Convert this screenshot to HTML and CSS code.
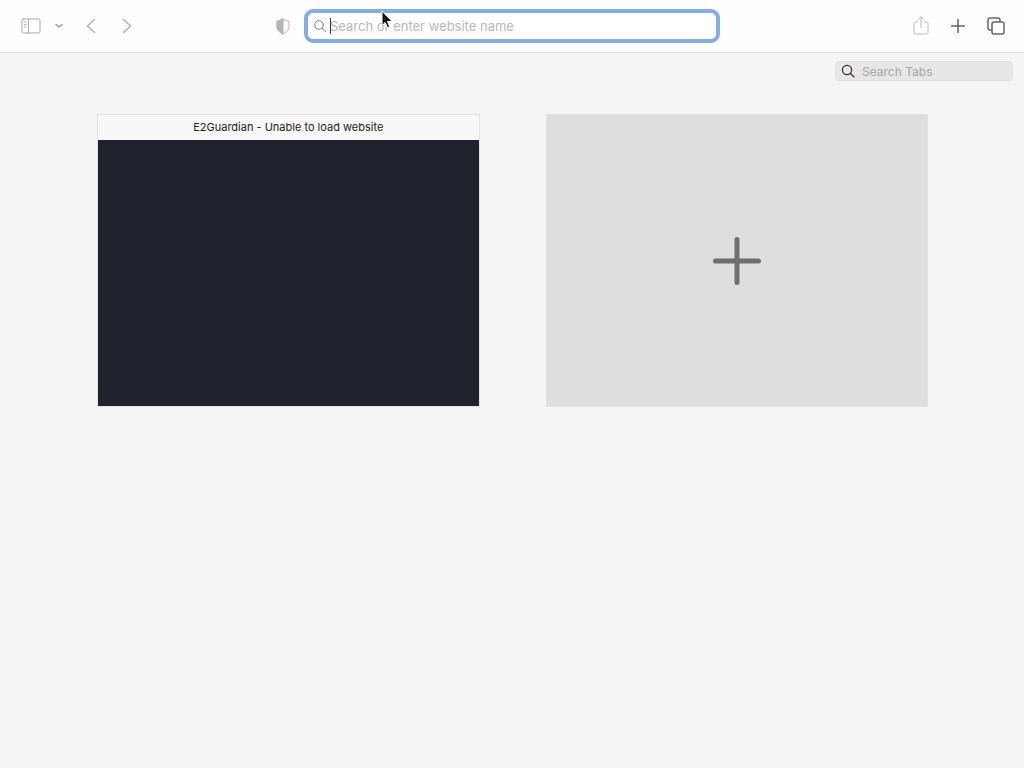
FILE: index.html
```html
<!DOCTYPE html>
<html lang="en">
<head>
<meta charset="utf-8">
<meta name="viewport" content="width=device-width, initial-scale=1">
<title>Tab Overview</title>
<link rel="stylesheet" href="styles.css">
</head>
<body>
<header class="toolbar">
  <div class="tools tools-left">
    <button class="tool sidebar" type="button" aria-label="Show sidebar">
      <svg width="20" height="16" viewBox="0 0 20 16"><rect x="1" y="1" width="18" height="14" rx="1.500"/><path d="M7.500 1v14M3.500 4h1.500M3.500 6.500h1.500M3.500 9h1.500"/></svg>
    </button>
    <button class="tool groups" type="button" aria-label="Tab groups">
      <svg width="10" height="6" viewBox="0 0 10 6"><path d="M2 1.500 5 4l3-2.500"/></svg>
    </button>
    <button class="tool back" type="button" aria-label="Back">
      <svg width="10" height="16" viewBox="0 0 10 16"><path d="M8.500 1.500 1.500 8l7 6.500"/></svg>
    </button>
    <button class="tool forward" type="button" aria-label="Forward">
      <svg width="10" height="16" viewBox="0 0 10 16"><path d="M1.500 1.500l7 6.500-7 6.500"/></svg>
    </button>
    <button class="tool shield" type="button" aria-label="Privacy report">
      <svg width="14" height="17" viewBox="0 0 14 17"><path d="M7 1c2 1.300 4 1.800 6 2v6c0 3-3 5.500-6 7-3-1.500-6-4-6-7V3c2-.2 4-.7 6-2z"/><path class="shield-half" d="M7 1v15c-3-1.500-6-4-6-7V3c2-.2 4-.7 6-2z"/></svg>
    </button>
  </div>
  <label class="address">
    <svg width="14" height="14" viewBox="0 0 14 14" aria-hidden="true"><circle cx="6" cy="6" r="4.300"/><path d="m9.200 9.200 3.500 3.500"/></svg>
    <input class="address-input" type="text" placeholder="Search or enter website name" aria-label="Search or enter website name">
    <span class="caret"></span>
    <svg class="pointer" width="14" height="20" viewBox="0 0 14 20" aria-hidden="true"><path d="M2 1.500v14l3.200-3 2.300 5.300 2.300-1-2.300-5.200H12z"/></svg>
  </label>
  <div class="tools tools-right">
    <button class="tool share" type="button" aria-label="Share">
      <svg width="16" height="20" viewBox="0 0 16 20"><path d="M5 6H2.500Q1 6 1 7.500v9Q1 18 2.500 18h11q1.500 0 1.500-1.500v-9Q15 6 13.500 6H11M8 11.500V1M5 3.800l3-3 3 3"/></svg>
    </button>
    <button class="tool new-tab" type="button" aria-label="New tab">
      <svg width="14" height="14" viewBox="0 0 14 14"><path d="M7 .5v13M.5 7h13"/></svg>
    </button>
    <button class="tool overview" type="button" aria-label="Tab overview">
      <svg width="18" height="18" viewBox="0 0 18 18"><path d="M4.500 13H3q-2 0-2-2V3q0-2 2-2h8q2 0 2 2v1.500"/><rect x="5" y="5" width="12" height="12" rx="2"/></svg>
    </button>
  </div>
</header>
<main>
  <div class="search-row">
    <label class="tab-search">
      <svg width="14" height="14" viewBox="0 0 14 14" aria-hidden="true"><circle cx="6" cy="6" r="4.600"/><path d="m9.300 9.300 3.700 3.700"/></svg>
      <input class="tab-input" type="search" placeholder="Search Tabs" aria-label="Search Tabs">
    </label>
  </div>
  <div class="tabs">
    <article class="tab">
      <h2 class="tab-title">E2Guardian - Unable to load website</h2>
      <div class="preview"></div>
    </article>
    <button class="add-tab" type="button" aria-label="Add tab">
      <svg width="48" height="48" viewBox="0 0 48 48"><path d="M24 2.500v43M2.500 24h43"/></svg>
    </button>
  </div>
</main>
</body>
</html>
```
FILE: styles.css
```css
* { box-sizing: border-box; }
body {
  margin: 0;
  min-height: 100vh;
  background: #f5f5f5;
  color: #222;
  font-family: Inter, "Liberation Sans", sans-serif;
}
svg {
  display: block;
  flex: none;
  fill: none;
  stroke: currentColor;
  stroke-linecap: round;
  stroke-linejoin: round;
}
button, input {
  margin: 0;
  padding: 0;
  border: 0;
  background: none;
  font: inherit;
}
.toolbar {
  display: grid;
  grid-template-columns: minmax(0, 1fr) minmax(0, 416px) minmax(0, 1fr);
  align-items: center;
  height: 53px;
  background: #fefefe;
  border-bottom: 1px solid #dcdcdc;
}
.tools { display: flex; align-items: center; }
.tools-left { padding: 0 14px 0 21px; }
.tools-right { justify-content: flex-end; gap: 22px; padding-right: 19px; }
.tool { color: #b0b0b0; stroke-width: 1.5; }
.sidebar { color: #a8a8a8; stroke-width: 1; }
.groups { margin-left: 13px; color: #999; }
.back { margin-left: 22px; }
.forward { margin-left: 26px; }
.shield { margin-left: auto; color: #b4b4b4; stroke-width: 1; }
.shield-half { fill: currentColor; }
.share { color: #b8b8b8; stroke-width: 1; }
.new-tab { color: #606060; }
.overview { color: #666; }
.address {
  position: relative;
  display: flex;
  align-items: center;
  gap: 3px;
  height: 34px;
  padding: 0 5px;
  border: 4px solid #86aee6;
  border-radius: 9px;
  background: #fff;
  color: #808080;
}
.address-input {
  flex: 1;
  min-width: 0;
  height: 20px;
  color: #333;
  font-size: 13px;
  outline: 0;
}
.address-input::placeholder { color: #b8b8b8; opacity: 1; }
.caret {
  position: absolute;
  top: 5px;
  left: 22px;
  width: 1px;
  height: 16px;
  background: #333;
}
.pointer {
  position: absolute;
  top: -3px;
  left: 72px;
  fill: #111;
  stroke: #fff;
}
.search-row { display: flex; justify-content: flex-end; padding: 8px 11px 0; }
.tab-search {
  display: flex;
  align-items: center;
  gap: 7px;
  width: 178px;
  height: 20px;
  padding: 0 5px;
  border: 1px solid #e0e0e0;
  border-radius: 4px;
  background: #e7e7e7;
  color: #333;
  stroke-width: 1.3;
}
.tab-input {
  flex: 1;
  min-width: 0;
  height: 16px;
  font-size: 12px;
  outline: 0;
  appearance: none;
}
.tab-input::placeholder { color: #a6a6a6; opacity: 1; }
.tabs {
  display: grid;
  grid-template-columns: repeat(2, minmax(0, 1fr));
  gap: 66px;
  padding: 33px 96px 40px 97px;
}
.tab {
  display: flex;
  flex-direction: column;
  aspect-ratio: 383 / 293;
  border: 1px solid #e3e3e3;
  background: #f8f8f8;
}
.tab-title {
  margin: 0;
  overflow: hidden;
  font-size: 11px;
  font-weight: 400;
  line-height: 25px;
  text-align: center;
  text-overflow: ellipsis;
  white-space: nowrap;
}
.preview { flex: 1; border: 1px solid #24252a; background: #1f222c; }
.add-tab {
  display: flex;
  align-items: center;
  justify-content: center;
  padding-top: 2px;
  border: 1px solid #e2e2e2;
  background: #dedede;
  color: #6e6e6e;
  stroke-width: 5;
}
```
